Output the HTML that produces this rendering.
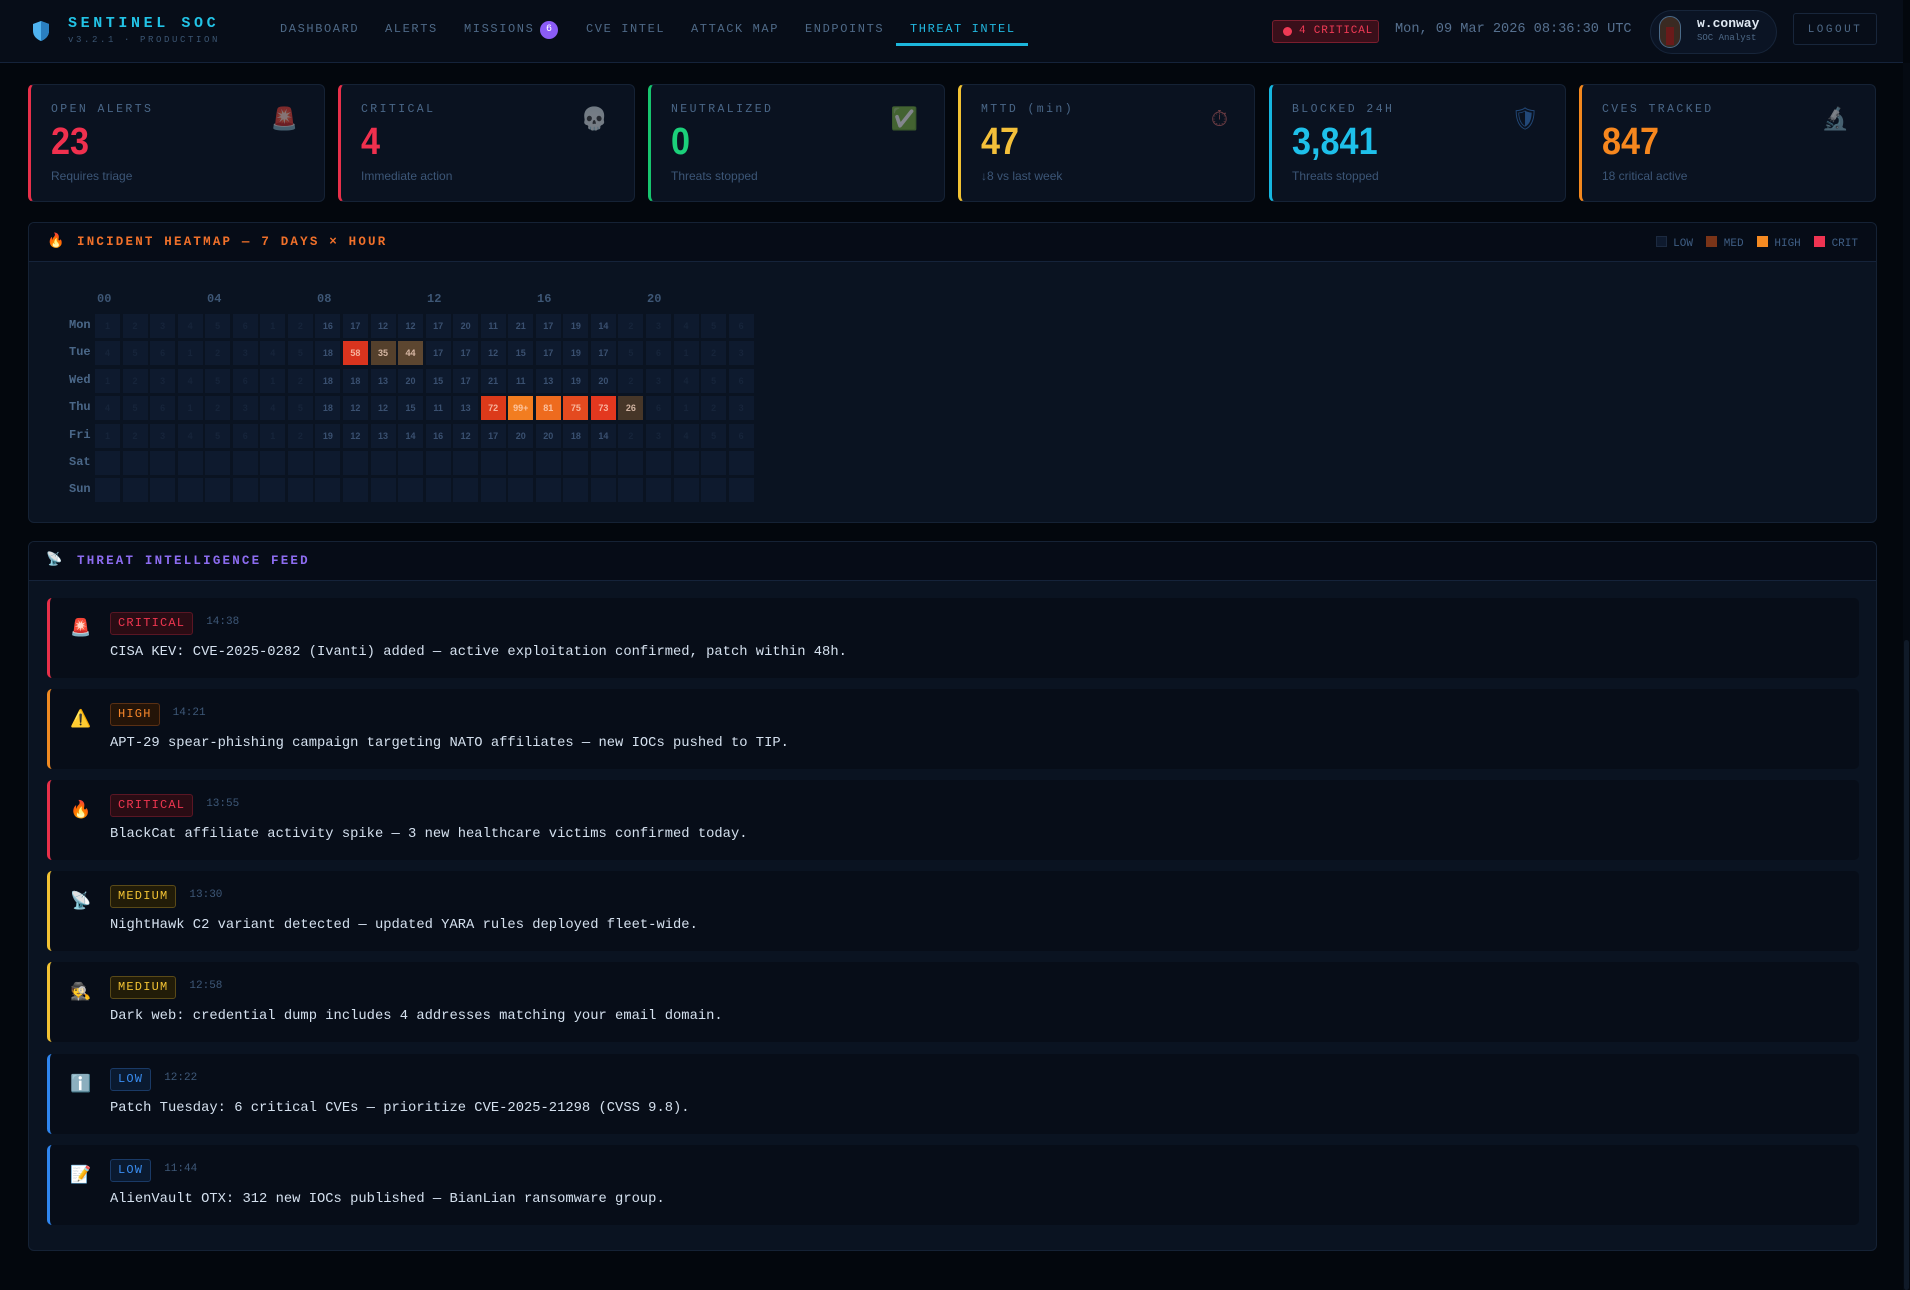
<!DOCTYPE html>
<html><head><meta charset="utf-8"><style>
*{box-sizing:border-box;margin:0;padding:0}
body{width:1910px;height:1290px;background:#03070d;font-family:"Liberation Mono",monospace;color:#c9d6e6;position:relative;overflow:hidden}
.abs{position:absolute}
.hdr{left:0;top:0;width:1903px;height:63px;background:#070d18;border-bottom:1px solid #15233a}
.nav{top:22px;font-size:12px;letter-spacing:1.6px;color:#4e6987}
.card{top:84px;width:297px;height:118px;background:#0a1220;border:1px solid #152235;border-radius:6px}
.card .lb{position:absolute;left:20px;top:18px;font-size:11.5px;letter-spacing:2.4px;color:#4a6788}
.card .num{position:absolute;left:20px;top:36px;font-family:"Liberation Sans Narrow","Liberation Sans",sans-serif;font-weight:bold;font-size:38px;transform:scaleX(.9);transform-origin:left}
.card .sub{position:absolute;left:20px;top:84px;font-family:"Liberation Sans Narrow","Liberation Sans",sans-serif;font-size:12px;color:#3c5677}
.card .ic{position:absolute;right:26px;top:22px;font-size:22px;opacity:.5;font-family:"DejaVu Sans",sans-serif}
.panel{left:28px;width:1849px;background:#0a1321;border:1px solid #152235;border-radius:6px;overflow:hidden}
.ph{height:39px;background:#060c17;border-bottom:1px solid #15233a;position:relative}
.ph .t{position:absolute;left:48px;top:12px;font-size:12.5px;font-weight:bold;letter-spacing:2.2px}
.cell{position:absolute;width:25px;height:24px;background:#0e1a2e;font-family:"Liberation Sans Narrow","Liberation Sans",sans-serif;font-size:9px;font-weight:bold;text-align:center;line-height:24px;color:#2c4058}
.hl{position:absolute;font-size:12px;font-weight:bold;color:#3d5675}
.dl{position:absolute;left:63px;font-size:12px;font-weight:bold;color:#4a6788}
.item{position:absolute;left:18px;width:1812px;height:80px;background:#070d18;border-left:3px solid;border-radius:5px}
.item .ic{position:absolute;left:20px;top:20px;font-size:17px;font-family:"DejaVu Sans",sans-serif}
.badge{position:absolute;left:60px;top:14px;height:23px;line-height:21px;padding:0 7px;font-size:12px;letter-spacing:1.2px;border:1px solid;border-radius:3px}
.tm{position:absolute;top:18px;font-size:11px;color:#3e5878}
.tx{position:absolute;left:60px;top:47px;font-size:13.8px;color:#d4e0ee}
</style></head><body>
<div class="abs hdr">
 <svg class="abs" style="left:32px;top:20px" width="18" height="22" viewBox="0 0 18 22"><path d="M9 1 L17 4 V11 C17 16 13 19.5 9 21 C5 19.5 1 16 1 11 V4 Z" fill="#4fb3f0"/><path d="M9 1 L17 4 V11 C17 16 13 19.5 9 21Z" fill="#2a7fc0"/></svg>
 <div class="abs" style="left:68px;top:15px;font-size:15px;font-weight:bold;letter-spacing:3.6px;color:#22c3e6">SENTINEL SOC</div>
 <div class="abs" style="left:68px;top:35px;font-size:9px;letter-spacing:2.6px;color:#3b5572">v3.2.1 · PRODUCTION</div>
 <div class="abs nav" style="left:280px">DASHBOARD</div>
 <div class="abs nav" style="left:385px">ALERTS</div>
 <div class="abs nav" style="left:464px">MISSIONS</div>
 <div class="abs" style="left:540px;top:21px;width:18px;height:18px;border-radius:9px;background:#8b5cf6;color:#fff;font-size:10px;text-align:center;line-height:18px">6</div>
 <div class="abs nav" style="left:586px">CVE INTEL</div>
 <div class="abs nav" style="left:691px">ATTACK MAP</div>
 <div class="abs nav" style="left:805px">ENDPOINTS</div>
 <div class="abs nav" style="left:910px;color:#22b8e0">THREAT INTEL</div>
 <div class="abs" style="left:896px;top:43px;width:132px;height:3px;background:#1cb6dc"></div>
 <div class="abs" style="left:1272px;top:20px;width:107px;height:23px;border:1px solid #7a1e2e;background:#3a0f1a;border-radius:3px;font-size:11px;color:#ef3a55;line-height:21px;padding-left:26px;letter-spacing:.8px">4 CRITICAL<span style="position:absolute;left:10px;top:6px;width:9px;height:9px;border-radius:5px;background:#ef3a55"></span></div>
 <div class="abs" style="left:1395px;top:22px;font-size:13.6px;color:#56708f">Mon, 09 Mar 2026 08:36:30 UTC</div>
 <div class="abs" style="left:1650px;top:10px;width:127px;height:44px;border:1px solid #17253a;border-radius:22px;background:#0b1424"></div>
 <div class="abs" style="left:1659px;top:16px;width:22px;height:32px;border-radius:11px;background:#3a2a22;border:1px solid #4a6a88"><div style="margin:10px auto 0;width:8px;height:18px;background:#6a1a1a"></div></div>
 <div class="abs" style="left:1697px;top:16px;font-size:13px;font-weight:bold;color:#dfe8f2">w.conway</div>
 <div class="abs" style="left:1697px;top:33px;font-size:9px;color:#4e6987">SOC Analyst</div>
 <div class="abs" style="left:1793px;top:13px;width:84px;height:32px;border:1px solid #18263b;border-radius:3px;font-size:11px;letter-spacing:2.5px;color:#4e6987;text-align:center;line-height:32px">LOGOUT</div>
</div>
<div class="abs" style="left:1903px;top:63px;width:7px;height:1227px;background:#050a12"></div>
<div class="abs" style="left:1904px;top:640px;width:5px;height:650px;background:#101a28;border-radius:3px"></div>

<div class="abs card" style="left:28px;border-left:3px solid #e8304a"><div class="lb">OPEN ALERTS</div><div class="num" style="color:#f0304e">23</div><div class="sub">Requires triage</div><div class="ic" style="color:#c33">🚨</div></div>
<div class="abs card" style="left:338px;border-left:3px solid #e8304a"><div class="lb">CRITICAL</div><div class="num" style="color:#f0304e">4</div><div class="sub">Immediate action</div><div class="ic" style="color:#aaa">💀</div></div>
<div class="abs card" style="left:648px;border-left:3px solid #17c46e"><div class="lb">NEUTRALIZED</div><div class="num" style="color:#1bd07a">0</div><div class="sub">Threats stopped</div><div class="ic" style="color:#2a8">✅</div></div>
<div class="abs card" style="left:958px;border-left:3px solid #f2c233"><div class="lb">MTTD (min)</div><div class="num" style="color:#f4c03a">47</div><div class="sub">↓8 vs last week</div><div class="ic" style="color:#c66">⏱</div></div>
<div class="abs card" style="left:1269px;border-left:3px solid #16b6e0"><div class="lb">BLOCKED 24H</div><div class="num" style="color:#1ec0ea">3,841</div><div class="sub">Threats stopped</div><div class="ic" style="color:#3a7fd0">🛡</div></div>
<div class="abs card" style="left:1579px;border-left:3px solid #f4881e"><div class="lb">CVES TRACKED</div><div class="num" style="color:#f7871e">847</div><div class="sub">18 critical active</div><div class="ic" style="color:#8aa">🔬</div></div>

<div class="abs panel" style="top:222px;height:301px">
 <div class="ph"><span class="abs" style="left:18px;top:10px;font-size:14px;color:#f07020;font-family:'DejaVu Sans'">🔥</span><div class="t" style="color:#f0702a">INCIDENT HEATMAP — 7 DAYS × HOUR</div>
  <div class="abs" style="right:18px;top:13px;font-size:11px;color:#3f5e84">
   <span style="display:inline-block;width:11px;height:11px;background:#0e1a2e;border:1px solid #1c2a40;vertical-align:-1px"></span> LOW&nbsp;
   <span style="display:inline-block;width:11px;height:11px;background:#7a3418;vertical-align:-1px"></span> MED&nbsp;
   <span style="display:inline-block;width:11px;height:11px;background:#f58a22;vertical-align:-1px"></span> HIGH&nbsp;
   <span style="display:inline-block;width:11px;height:11px;background:#ef3452;vertical-align:-1px"></span> CRIT</div>
 </div>
 <div id="hm"></div>
</div>

<div class="abs panel" style="top:541px;height:710px">
 <div class="ph"><span class="abs" style="left:17px;top:10px;font-size:13px;color:#ccd;font-family:'DejaVu Sans'">📡</span><div class="t" style="color:#8c6cf0">THREAT INTELLIGENCE FEED</div></div>
 <div id="feed"></div>
</div>

<script>
var hm=document.getElementById('hm'),h='';
var hrs=['00','04','08','12','16','20'];
for(var i=0;i<6;i++)h+='<div class="hl" style="left:'+(68+i*110)+'px;top:69px">'+hrs[i]+'</div>';
var days=['Mon','Tue','Wed','Thu','Fri','Sat','Sun'];
var D={0:{8:16,9:17,10:12,11:12,12:17,13:20,14:11,15:21,16:17,17:19,18:14},
1:{8:18,9:58,10:35,11:44,12:17,13:17,14:12,15:15,16:17,17:19,18:17},
2:{8:18,9:18,10:13,11:20,12:15,13:17,14:21,15:11,16:13,17:19,18:20},
3:{8:18,9:12,10:12,11:15,12:11,13:13,14:72,15:'99+',16:81,17:75,18:73,19:26},
4:{8:19,9:12,10:13,11:14,12:16,13:12,14:17,15:20,16:20,17:18,18:14}};
var C={'1,9':'#d9341e','1,10':'#54402c','1,11':'#5c4630','3,14':'#dc3a1a','3,15':'#f27d20','3,16':'#ee6b1e','3,17':'#e44a1f','3,18':'#e3381f','3,19':'#463628'};
for(var r=0;r<7;r++){var y=91+r*27.4;
 h+='<div class="dl" style="left:40px;top:'+(y+4)+'px">'+days[r]+'</div>';
 for(var c=0;c<24;c++){var v=D[r]&&D[r][c];var bg=C[r+','+c];
  var st='left:'+(66+c*27.55)+'px;top:'+y+'px;';
  if(bg)st+='background:'+bg+';color:rgba(255,220,200,.75);';
  else if(v)st+='color:#3a5070;';
  else {v=(r<5)?((c*7+r*3)%6+1):'';st+='color:#16243a;';}
  h+='<div class="cell" style="'+st+'">'+v+'</div>';}}
hm.innerHTML=h;
var F=[['#e8304a','🚨','#e33','CRITICAL','#ef3650','#5a1624','#2a0c14','14:38','CISA KEV: CVE-2025-0282 (Ivanti) added — active exploitation confirmed, patch within 48h.'],
['#f08a22','⚠️','#f5b830','HIGH','#f5862a','#5a3014','#241408','14:21','APT-29 spear-phishing campaign targeting NATO affiliates — new IOCs pushed to TIP.'],
['#e8304a','🔥','#f07020','CRITICAL','#ef3650','#5a1624','#2a0c14','13:55','BlackCat affiliate activity spike — 3 new healthcare victims confirmed today.'],
['#f2c233','📡','#ccd','MEDIUM','#f2c233','#5a4a18','#221c08','13:30','NightHawk C2 variant detected — updated YARA rules deployed fleet-wide.'],
['#f2c233','🕵','#a98','MEDIUM','#f2c233','#5a4a18','#221c08','12:58','Dark web: credential dump includes 4 addresses matching your email domain.'],
['#2f86f0','ℹ️','#4a9cf0','LOW','#3a8ef2','#1a3a66','#0a1a30','12:22','Patch Tuesday: 6 critical CVEs — prioritize CVE-2025-21298 (CVSS 9.8).'],
['#2f86f0','📝','#eee','LOW','#3a8ef2','#1a3a66','#0a1a30','11:44','AlienVault OTX: 312 new IOCs published — BianLian ransomware group.']];
var f='';
for(var i=0;i<F.length;i++){var a=F[i];var bw=a[3].length*8.4+16;
 f+='<div class="item" style="top:'+(56+i*91.1)+'px;border-left-color:'+a[0]+'"><div class="ic" style="color:'+a[2]+'">'+a[1]+'</div>'+
 '<div class="badge" style="color:'+a[4]+';border-color:'+a[5]+';background:'+a[6]+'">'+a[3]+'</div>'+
 '<div class="tm" style="left:'+(60+bw+13)+'px">'+a[7]+'</div><div class="tx">'+a[8]+'</div></div>';}
document.getElementById('feed').innerHTML=f;
</script>
</body></html>
